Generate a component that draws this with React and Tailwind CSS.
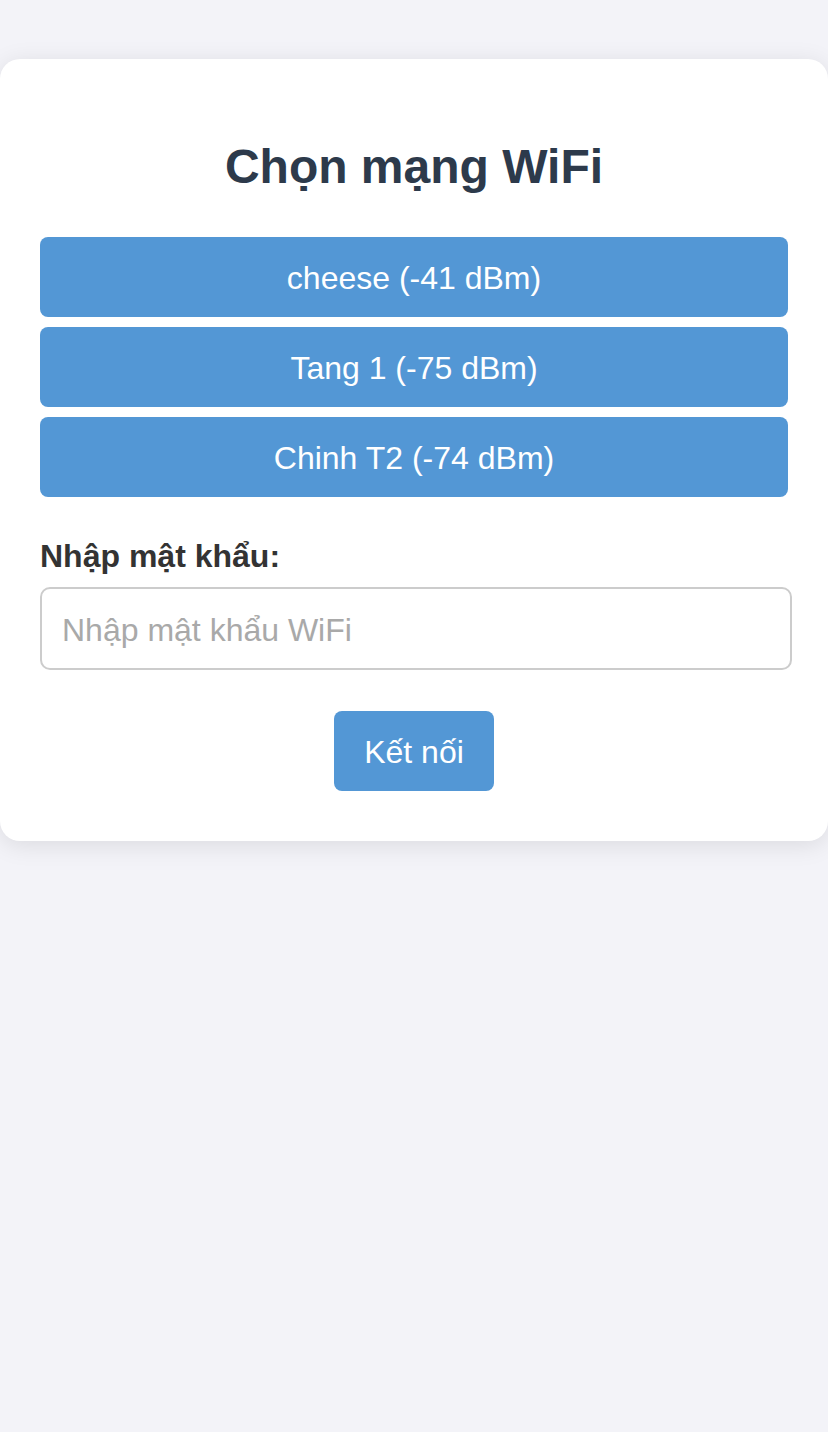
export default function App() {
  const nets = ["cheese (-41 dBm)", "Tang 1 (-75 dBm)", "Chinh T2 (-74 dBm)"];
  return (
    <div
      className="min-h-[1432px] bg-[#f3f3f8] pt-[59px]"
      style={{ fontFamily: '"Liberation Sans", Arial, sans-serif' }}
    >
      <div className="rounded-[20px] bg-white px-[40px] pt-[80px] pb-[50px] shadow-[0_4px_24px_rgba(0,0,0,0.1)]">
        <h2 className="text-center text-[48px] leading-[55px] font-bold text-[#2d3a4b]">
          Chọn mạng WiFi
        </h2>
        <div className="mt-[43px] flex flex-col gap-[10px]">
          {nets.map((n) => (
            <button
              key={n}
              className="h-[80px] w-full rounded-[8px] bg-[#5397d5] pt-[2px] text-[32px] text-white"
            >
              {n}
            </button>
          ))}
        </div>
        <label className="mt-[41px] block text-[32px] leading-[37px] font-bold text-[#333333]">
          Nhập mật khẩu:
        </label>
        <input
          type="password"
          placeholder="Nhập mật khẩu WiFi"
          className="mt-[12px] block h-[83px] w-[752px] rounded-[10px] border-2 border-[#cccccc] px-[20px] pt-[4px] text-[32px] outline-none placeholder:text-[#a9a9a9]"
        />
        <div className="mt-[41px] flex justify-center">
          <button className="h-[80px] w-[160px] rounded-[8px] bg-[#5397d5] pt-[2px] text-[32px] text-white">
            Kết nối
          </button>
        </div>
      </div>
    </div>
  );
}
